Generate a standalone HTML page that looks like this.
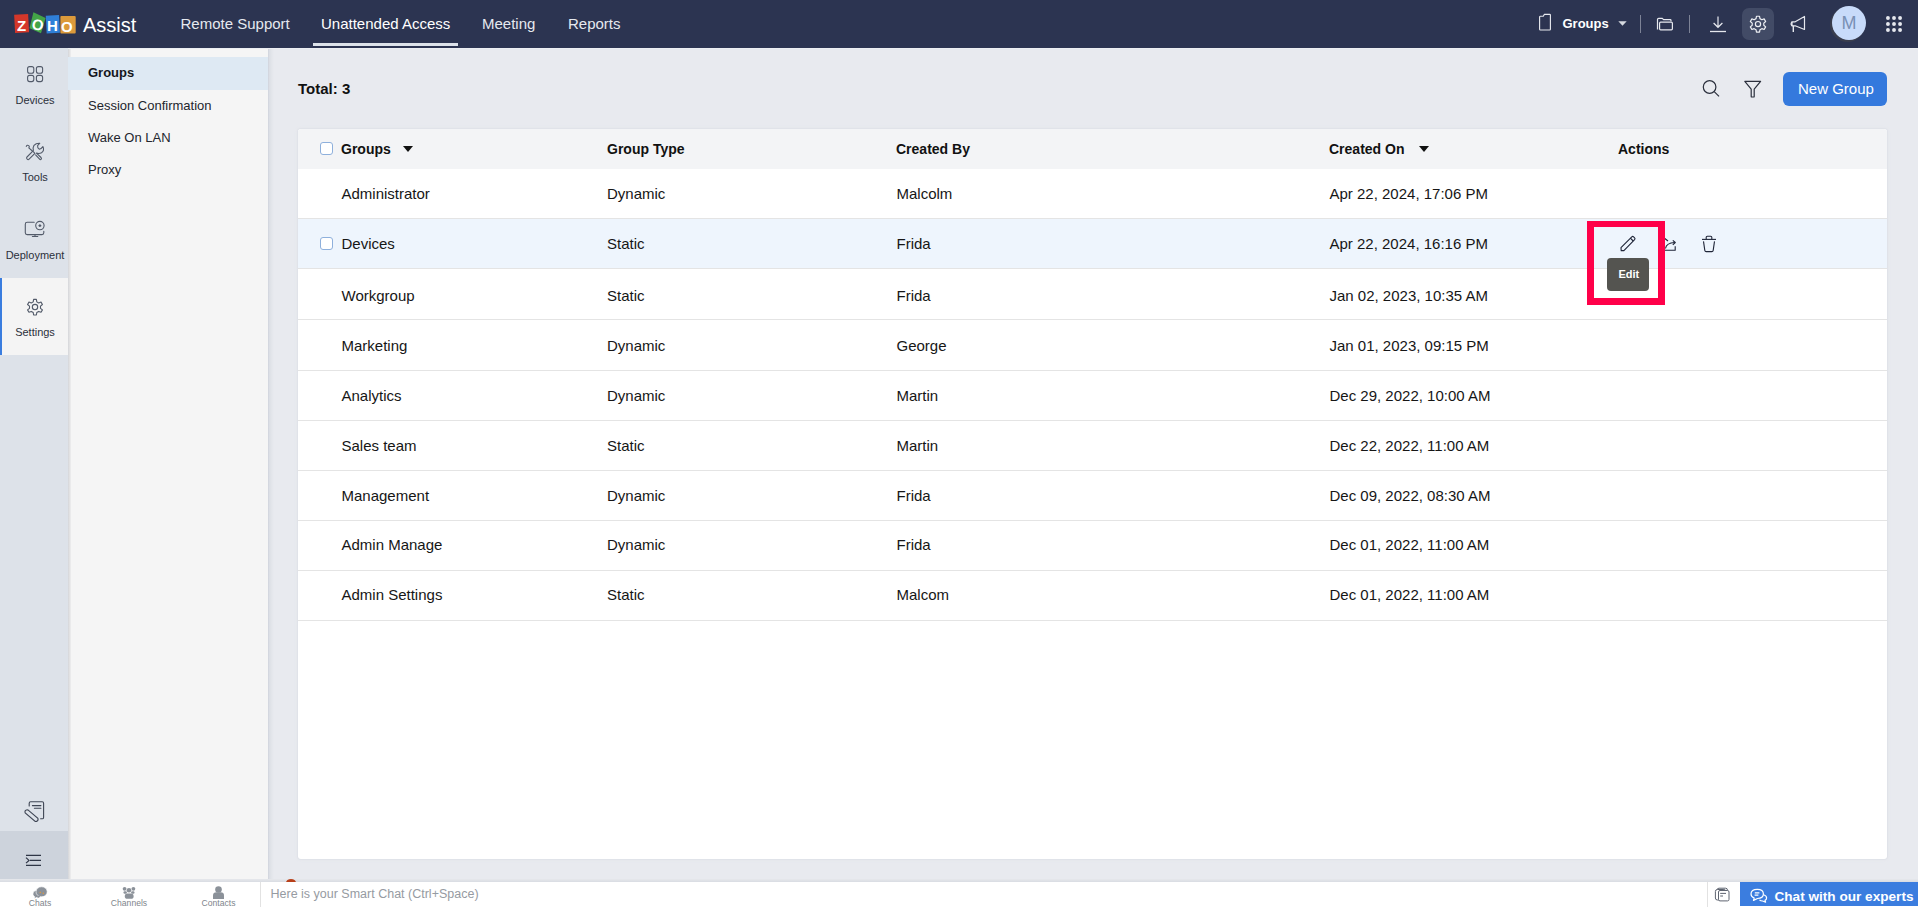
<!DOCTYPE html>
<html><head><meta charset="utf-8">
<style>
*{box-sizing:border-box;margin:0;padding:0}
html,body{width:1919px;height:907px;overflow:hidden;background:#e8eaef;font-family:"Liberation Sans",sans-serif;color:#1d1d1f;position:relative}
.a{position:absolute;white-space:nowrap;line-height:1}
.b{position:absolute}
svg.b{overflow:visible}
</style></head>
<body>
<div class="b" style="left:0;top:0;width:1919px;height:48px;background:#2c3451"></div>
<svg class="b" style="left:0;top:0" width="80" height="48" viewBox="0 0 80 48">
<g transform="rotate(-3 21.5 23.4)"><rect x="14.6" y="14.3" width="14" height="18.4" fill="#d4372a"/></g>
<path d="M33.4 12.2L45.6 17.9L41 33.2L29.5 28.2Z" fill="#43a447"/>
<g transform="rotate(-3 52.8 24.2)"><rect x="46.2" y="15.4" width="13.3" height="17.7" fill="#2f7fd8"/></g>
<rect x="60.4" y="16" width="15.3" height="17.5" rx="1" fill="#dc9a3b"/>
<g font-family="Liberation Sans" font-weight="bold" font-size="15" fill="#fff" text-anchor="middle">
<text x="21.5" y="31.4">Z</text><text x="37.9" y="30" transform="rotate(12 37.9 24.5)">O</text><text x="52.4" y="31.4">H</text><text x="66.9" y="31.7">O</text>
</g></svg>
<div class="a" style="left:83px;top:15.07px;font-size:20px;font-weight:normal;color:#ffffff;">Assist</div>
<div class="a" style="left:180.5px;top:16.30px;font-size:15px;font-weight:normal;color:#e6e9ef;">Remote Support</div>
<div class="a" style="left:321px;top:16.30px;font-size:15px;font-weight:normal;color:#ffffff;">Unattended Access</div>
<div class="b" style="left:313px;top:43px;width:145px;height:3px;background:#dde2ea"></div>
<div class="a" style="left:482px;top:16.30px;font-size:15px;font-weight:normal;color:#e6e9ef;">Meeting</div>
<div class="a" style="left:568px;top:16.30px;font-size:15px;font-weight:normal;color:#e6e9ef;">Reports</div>
<svg class="b" style="left:1535px;top:10px" width="20" height="26" viewBox="0 0 20 26"><path d="M5.4 6.2H8.3L9.4 4.3H14.6Q15.4 4.3 15.4 5.1V19.2Q15.4 20 14.6 20H5.4Q4.6 20 4.6 19.2V7Q4.6 6.2 5.4 6.2Z" fill="none" stroke="#e6e8ee" stroke-width="1.15" stroke-linejoin="round"/></svg>
<div class="a" style="left:1562.5px;top:16.60px;font-size:13px;font-weight:bold;color:#ffffff;">Groups</div>
<svg class="b" style="left:1617.5px;top:20.5px" width="9" height="5" viewBox="0 0 9 5"><path d="M0.3 0.3H8.7L4.5 4.7Z" fill="#d6d9e0"/></svg>
<div class="b" style="left:1640px;top:15px;width:1px;height:18px;background:#7d8396"></div>
<div class="b" style="left:1689px;top:15px;width:1px;height:18px;background:#7d8396"></div>
<svg class="b" style="left:1655px;top:16px" width="20" height="16" viewBox="0 0 20 16"><path d="M2.5 13.5V3.5Q2.5 2.3 3.7 2.3H7.2L8.6 3.6H15.2Q16 3.6 16 4.4V5.3" fill="none" stroke="#e6e8ee" stroke-width="1.2"/><rect x="4.6" y="6.2" width="12.8" height="7.6" rx="1" fill="none" stroke="#e6e8ee" stroke-width="1.2"/></svg>
<svg class="b" style="left:1709px;top:15px" width="18" height="18" viewBox="0 0 18 18"><path d="M9 1.5V12M4.6 8L9 12.3L13.4 8" fill="none" stroke="#e6e8ee" stroke-width="1.2"/><path d="M1 16.5H17" stroke="#e6e8ee" stroke-width="1.3"/></svg>
<div class="b" style="left:1742px;top:8px;width:32px;height:32px;background:#424b66;border-radius:7px"></div>
<svg class="b" style="left:1742px;top:8px" width="32" height="32" viewBox="0 0 32 32"><path d="M14.04 10.63 L14.48 8.24 L17.52 8.24 L17.96 10.63 L19.84 11.72 L22.13 10.91 L23.65 13.54 L21.80 15.11 L21.80 17.29 L23.65 18.86 L22.13 21.49 L19.84 20.68 L17.96 21.77 L17.52 24.16 L14.48 24.16 L14.04 21.77 L12.16 20.68 L9.87 21.49 L8.35 18.86 L10.20 17.29 L10.20 15.11 L8.35 13.54 L9.87 10.91 L12.16 11.72Z" fill="none" stroke="#eef0f4" stroke-width="1.2" stroke-linejoin="round"/><circle cx="16" cy="16.1" r="2.6" fill="none" stroke="#eef0f4" stroke-width="1.2"/></svg>
<svg class="b" style="left:1789px;top:15px" width="18" height="18" viewBox="0 0 18 18"><path d="M3 6.8H6.2L15.5 1.5V14.5L6.2 10.8H3Z" fill="none" stroke="#e6e8ee" stroke-width="1.2" stroke-linejoin="round"/><path d="M3 6.8Q1.2 8.8 3 10.8" fill="none" stroke="#e6e8ee" stroke-width="1.2"/><path d="M4.3 10.8V17" stroke="#e6e8ee" stroke-width="1.4"/></svg>
<div class="b" style="left:1830px;top:7px;width:35px;height:35px;border-radius:50%;background:#4a4a4a;opacity:.45"></div>
<div class="b" style="left:1832px;top:6px;width:34px;height:34px;border-radius:50%;background:#c8dbfa"></div>
<div class="a" style="left:1832px;top:13.9px;width:34px;text-align:center;font-size:18px;color:#7890b5">M</div>
<svg class="b" style="left:1886px;top:16px" width="16" height="16" viewBox="0 0 16 16"><circle cx="1.95" cy="1.95" r="1.95" fill="#e6e8ee"/><circle cx="1.95" cy="8.0" r="1.95" fill="#e6e8ee"/><circle cx="1.95" cy="14.049999999999999" r="1.95" fill="#e6e8ee"/><circle cx="8.0" cy="1.95" r="1.95" fill="#e6e8ee"/><circle cx="8.0" cy="8.0" r="1.95" fill="#e6e8ee"/><circle cx="8.0" cy="14.049999999999999" r="1.95" fill="#e6e8ee"/><circle cx="14.049999999999999" cy="1.95" r="1.95" fill="#e6e8ee"/><circle cx="14.049999999999999" cy="8.0" r="1.95" fill="#e6e8ee"/><circle cx="14.049999999999999" cy="14.049999999999999" r="1.95" fill="#e6e8ee"/></svg>
<div class="b" style="left:0;top:48px;width:68px;height:834px;background:#dde2e9"></div>
<div class="b" style="left:0;top:278px;width:68px;height:77px;background:#f4f4f4"></div>
<div class="b" style="left:0;top:278px;width:2px;height:77px;background:#3a7ddf"></div>
<div class="b" style="left:0;top:831px;width:68px;height:51px;background:#cdd3dc"></div>
<div class="a" style="left:1px;width:68px;text-align:center;top:94.69px;font-size:11px;color:#2b303b">Devices</div>
<div class="a" style="left:1px;width:68px;text-align:center;top:171.69px;font-size:11px;color:#2b303b">Tools</div>
<div class="a" style="left:1px;width:68px;text-align:center;top:249.69px;font-size:11px;color:#2b303b">Deployment</div>
<div class="a" style="left:1px;width:68px;text-align:center;top:326.69px;font-size:11px;color:#2b303b">Settings</div>
<svg class="b" style="left:20px;top:60px" width="30" height="30" viewBox="0 0 30 30"><g fill="none" stroke="#525a69" stroke-width="1.1"><rect x="7.6" y="6.6" width="6.2" height="6.6" rx="2"/><rect x="16.4" y="6.6" width="6.2" height="6.6" rx="2"/><rect x="7.6" y="15.4" width="6.2" height="6.2" rx="2"/><rect x="16.4" y="15.4" width="6.2" height="6.2" rx="2"/></g></svg>
<svg class="b" style="left:20px;top:138px" width="30" height="30" viewBox="0 0 30 30"><g fill="none" stroke="#525a69" stroke-width="1.1" stroke-linejoin="round" stroke-linecap="round"><path d="M7.2 21.2Q6 20 7 19L12.8 13.2L14.9 15.3L9.1 21.1Q8.2 22.2 7.2 21.2Z"/><path d="M13.4 12.4Q12.6 9.8 14 7.3Q16 5 19.8 5.2L17.6 7.6Q17.2 10 19.4 11.2Q21 11.2 22.9 8.6Q24.8 12.6 21.5 14.8Q19.3 16 16.4 15.1"/><path d="M6.3 8.4Q7 6.6 8.7 7.6Q9.9 8.7 8.8 9.8L12.4 13"/><path d="M15.6 16.8L19.6 21.2Q20.4 22.2 21.2 21.2Q21.9 20.3 21 19.5L17 15.6"/></g></svg>
<svg class="b" style="left:20px;top:215px" width="30" height="30" viewBox="0 0 30 30"><g fill="none" stroke="#525a69" stroke-width="1.1" stroke-linecap="round"><path d="M14.2 7.3H7.2Q5.3 7.3 5.3 9.2V17.7Q5.3 19.6 7.2 19.6H21.9Q23.8 19.6 23.8 17.7V16.3"/><circle cx="19.9" cy="10.6" r="4.2"/><path d="M15 19.6V21.3M12.4 21.5H17.8"/></g><path d="M19.9 9.2V12M18.5 10.6H21.3" stroke="#525a69" stroke-width="1.3"/></svg>
<svg class="b" style="left:20px;top:292px" width="30" height="30" viewBox="0 0 30 30"><path d="M13.22 9.89 L13.60 7.42 L16.40 7.42 L16.78 9.89 L18.71 11.00 L21.03 10.10 L22.43 12.52 L20.49 14.09 L20.49 16.31 L22.43 17.88 L21.03 20.30 L18.71 19.40 L16.78 20.51 L16.40 22.98 L13.60 22.98 L13.22 20.51 L11.29 19.40 L8.97 20.30 L7.57 17.88 L9.51 16.31 L9.51 14.09 L7.57 12.52 L8.97 10.10 L11.29 11.00Z" fill="none" stroke="#525a69" stroke-width="1.1" stroke-linejoin="round"/><circle cx="15" cy="15.1" r="2.7" fill="none" stroke="#525a69" stroke-width="1.1"/></svg>
<svg class="b" style="left:18px;top:795px" width="32" height="32" viewBox="0 0 32 32"><g fill="none" stroke="#3e4554" stroke-width="1.1" stroke-linecap="round"><path d="M11.2 11V8.2Q11.2 6.8 12.6 6.8H24.2Q25.6 6.8 25.6 8.2V22.4Q25.6 23.8 24.2 23.8H22.6"/><path d="M14.4 10.6H22.9M16.4 13.2H22.9"/><path d="M9.9 14.9L19.9 23.4Q20.6 25.6 18.6 26.4L17.2 26.5L7.2 18Q6.4 15.6 8.4 15Z"/></g></svg>
<svg class="b" style="left:18px;top:845px" width="32" height="30" viewBox="0 0 32 30"><g fill="none" stroke="#2f3646" stroke-width="1.2"><path d="M8 10.4H23M12 15.4H23M8 20.3H23M8 12.6L11 15.4L8 18.1"/></g></svg>
<div class="b" style="left:68px;top:48px;width:200px;height:834px;background:#f5f5f5"></div>
<div class="b" style="left:268px;top:48px;width:6px;height:834px;background:linear-gradient(90deg,#cdd1da 0,#dadde4 17%,#e1e4e9 50%,#e8eaef 100%)"></div>
<div class="b" style="left:68px;top:48px;width:3px;height:834px;background:linear-gradient(90deg,#d6d7db 0,#d9dadd 20%,#e2e2e3 50%,#eeeeef 100%)"></div>
<div class="b" style="left:68px;top:57px;width:200px;height:33px;background:#dee9f3"></div>
<div class="a" style="left:88px;top:66.00px;font-size:13px;font-weight:bold;color:#15171c;">Groups</div>
<div class="a" style="left:88px;top:99.00px;font-size:13px;font-weight:normal;color:#23262d;">Session Confirmation</div>
<div class="a" style="left:88px;top:130.80px;font-size:13px;font-weight:normal;color:#23262d;">Wake On LAN</div>
<div class="a" style="left:88px;top:163.30px;font-size:13px;font-weight:normal;color:#23262d;">Proxy</div>
<div class="a" style="left:298px;top:81.30px;font-size:15px;font-weight:bold;color:#111;">Total: 3</div>
<div class="b" style="left:1783px;top:72px;width:104px;height:34px;background:#3479dd;border-radius:6px"></div>
<div class="a" style="left:1798px;top:81.30px;font-size:15px;font-weight:normal;color:#ffffff;">New Group</div>
<div class="b" style="left:298px;top:129px;width:1589px;height:730px;background:#fff;border-radius:3px;overflow:hidden;box-shadow:0 0 0 1px #e0e3e9,0 0 3px 1px #e3e5ea"><div class="b" style="left:0;top:0;width:1589px;height:40px;background:#f3f4f6"></div></div>
<div class="a" style="left:341px;top:142.15px;font-size:14px;font-weight:bold;color:#111;">Groups</div>
<div class="a" style="left:607px;top:142.15px;font-size:14px;font-weight:bold;color:#111;">Group Type</div>
<div class="a" style="left:896px;top:142.15px;font-size:14px;font-weight:bold;color:#111;">Created By</div>
<div class="a" style="left:1329px;top:142.15px;font-size:14px;font-weight:bold;color:#111;">Created On</div>
<div class="a" style="left:1618px;top:142.15px;font-size:14px;font-weight:bold;color:#111;">Actions</div>
<svg class="b" style="left:403px;top:146px" width="10" height="6" viewBox="0 0 10 6"><path d="M0 0H10L5 6Z" fill="#111"/></svg>
<svg class="b" style="left:1419px;top:146px" width="10" height="6" viewBox="0 0 10 6"><path d="M0 0H10L5 6Z" fill="#111"/></svg>
<div class="b" style="left:320px;top:142px;width:13px;height:13px;border:1px solid #8eb0dc;border-radius:3px;background:#fff"></div>
<div class="b" style="left:298px;top:219px;width:1589px;height:49px;background:#eef5fd"></div>
<div class="a" style="left:341.5px;top:185.60px;font-size:15px;font-weight:normal;color:#161616;">Administrator</div>
<div class="a" style="left:607px;top:185.60px;font-size:15px;font-weight:normal;color:#161616;">Dynamic</div>
<div class="a" style="left:896.5px;top:185.60px;font-size:15px;font-weight:normal;color:#161616;">Malcolm</div>
<div class="a" style="left:1329.5px;top:185.60px;font-size:15px;font-weight:normal;color:#161616;">Apr 22, 2024, 17:06 PM</div>
<div class="b" style="left:298px;top:218px;width:1589px;height:1px;background:#e4e4e4"></div>
<div class="a" style="left:341.5px;top:235.60px;font-size:15px;font-weight:normal;color:#161616;">Devices</div>
<div class="a" style="left:607px;top:235.60px;font-size:15px;font-weight:normal;color:#161616;">Static</div>
<div class="a" style="left:896.5px;top:235.60px;font-size:15px;font-weight:normal;color:#161616;">Frida</div>
<div class="a" style="left:1329.5px;top:235.60px;font-size:15px;font-weight:normal;color:#161616;">Apr 22, 2024, 16:16 PM</div>
<div class="b" style="left:298px;top:268px;width:1589px;height:1px;background:#e4e4e4"></div>
<div class="a" style="left:341.5px;top:287.90px;font-size:15px;font-weight:normal;color:#161616;">Workgroup</div>
<div class="a" style="left:607px;top:287.90px;font-size:15px;font-weight:normal;color:#161616;">Static</div>
<div class="a" style="left:896.5px;top:287.90px;font-size:15px;font-weight:normal;color:#161616;">Frida</div>
<div class="a" style="left:1329.5px;top:287.90px;font-size:15px;font-weight:normal;color:#161616;">Jan 02, 2023, 10:35 AM</div>
<div class="b" style="left:298px;top:319px;width:1589px;height:1px;background:#e4e4e4"></div>
<div class="a" style="left:341.5px;top:338.10px;font-size:15px;font-weight:normal;color:#161616;">Marketing</div>
<div class="a" style="left:607px;top:338.10px;font-size:15px;font-weight:normal;color:#161616;">Dynamic</div>
<div class="a" style="left:896.5px;top:338.10px;font-size:15px;font-weight:normal;color:#161616;">George</div>
<div class="a" style="left:1329.5px;top:338.10px;font-size:15px;font-weight:normal;color:#161616;">Jan 01, 2023, 09:15 PM</div>
<div class="b" style="left:298px;top:370px;width:1589px;height:1px;background:#e4e4e4"></div>
<div class="a" style="left:341.5px;top:387.60px;font-size:15px;font-weight:normal;color:#161616;">Analytics</div>
<div class="a" style="left:607px;top:387.60px;font-size:15px;font-weight:normal;color:#161616;">Dynamic</div>
<div class="a" style="left:896.5px;top:387.60px;font-size:15px;font-weight:normal;color:#161616;">Martin</div>
<div class="a" style="left:1329.5px;top:387.60px;font-size:15px;font-weight:normal;color:#161616;">Dec 29, 2022, 10:00 AM</div>
<div class="b" style="left:298px;top:420px;width:1589px;height:1px;background:#e4e4e4"></div>
<div class="a" style="left:341.5px;top:437.50px;font-size:15px;font-weight:normal;color:#161616;">Sales team</div>
<div class="a" style="left:607px;top:437.50px;font-size:15px;font-weight:normal;color:#161616;">Static</div>
<div class="a" style="left:896.5px;top:437.50px;font-size:15px;font-weight:normal;color:#161616;">Martin</div>
<div class="a" style="left:1329.5px;top:437.50px;font-size:15px;font-weight:normal;color:#161616;">Dec 22, 2022, 11:00 AM</div>
<div class="b" style="left:298px;top:470px;width:1589px;height:1px;background:#e4e4e4"></div>
<div class="a" style="left:341.5px;top:487.60px;font-size:15px;font-weight:normal;color:#161616;">Management</div>
<div class="a" style="left:607px;top:487.60px;font-size:15px;font-weight:normal;color:#161616;">Dynamic</div>
<div class="a" style="left:896.5px;top:487.60px;font-size:15px;font-weight:normal;color:#161616;">Frida</div>
<div class="a" style="left:1329.5px;top:487.60px;font-size:15px;font-weight:normal;color:#161616;">Dec 09, 2022, 08:30 AM</div>
<div class="b" style="left:298px;top:520px;width:1589px;height:1px;background:#e4e4e4"></div>
<div class="a" style="left:341.5px;top:536.90px;font-size:15px;font-weight:normal;color:#161616;">Admin Manage</div>
<div class="a" style="left:607px;top:536.90px;font-size:15px;font-weight:normal;color:#161616;">Dynamic</div>
<div class="a" style="left:896.5px;top:536.90px;font-size:15px;font-weight:normal;color:#161616;">Frida</div>
<div class="a" style="left:1329.5px;top:536.90px;font-size:15px;font-weight:normal;color:#161616;">Dec 01, 2022, 11:00 AM</div>
<div class="b" style="left:298px;top:570px;width:1589px;height:1px;background:#e4e4e4"></div>
<div class="a" style="left:341.5px;top:586.90px;font-size:15px;font-weight:normal;color:#161616;">Admin Settings</div>
<div class="a" style="left:607px;top:586.90px;font-size:15px;font-weight:normal;color:#161616;">Static</div>
<div class="a" style="left:896.5px;top:586.90px;font-size:15px;font-weight:normal;color:#161616;">Malcom</div>
<div class="a" style="left:1329.5px;top:586.90px;font-size:15px;font-weight:normal;color:#161616;">Dec 01, 2022, 11:00 AM</div>
<div class="b" style="left:298px;top:620px;width:1589px;height:1px;background:#e4e4e4"></div>
<div class="b" style="left:320px;top:237px;width:13px;height:13px;border:1px solid #8eb0dc;border-radius:3px;background:#fff"></div>
<svg class="b" style="left:1612px;top:228px" width="30" height="30" viewBox="0 0 30 30"><g fill="none" stroke="#1f2538" stroke-width="1.1" stroke-linejoin="round"><path d="M9.2 22.6L9 19.6L19.8 8.8Q20.7 7.9 21.6 8.8L22.6 9.8Q23.5 10.7 22.6 11.6L11.9 22.6Z"/><path d="M18.4 10.2L21.2 13"/></g></svg>
<svg class="b" style="left:1660px;top:228px" width="20" height="30" viewBox="0 0 20 30"><g fill="none" stroke="#1f2538" stroke-width="1.1" stroke-linejoin="round"><path d="M4.6 22.3H15.2V18.3"/><path d="M5.5 20.5Q6.2 15 14.8 14.5"/><path d="M12.8 12.4L15.3 14.5L12.8 16.8"/><path d="M3.5 9.5L8 13"/></g></svg>
<svg class="b" style="left:1694px;top:228px" width="30" height="30" viewBox="0 0 30 30"><g fill="none" stroke="#1f2538" stroke-width="1.1" stroke-linejoin="round"><path d="M8 11.4H22"/><path d="M12.2 11.2V9.3Q12.2 8.2 13.3 8.2H16.7Q17.8 8.2 17.8 9.3V11.2"/><path d="M9.5 13.3L10.8 22.4Q11 23.6 12.2 23.6H17.8Q19 23.6 19.2 22.4L20.5 13.3"/></g></svg>
<svg class="b" style="left:1700px;top:77px" width="22" height="22" viewBox="0 0 22 22"><g fill="none" stroke="#2a2f3c" stroke-width="1.2"><circle cx="9.6" cy="10" r="6.3"/><path d="M14.2 14.6L19 19.4"/></g></svg>
<svg class="b" style="left:1742px;top:78px" width="22" height="22" viewBox="0 0 22 22"><g fill="none" stroke="#2a2f3c" stroke-width="1.2" stroke-linejoin="round"><path d="M2.8 3.4H18.6L12.2 11.2V18.4Q12.2 19 11.6 19H9.8Q9.2 19 9.2 18.4V11.2Z"/></g></svg>
<div class="b" style="left:0;top:879px;width:1919px;height:3px;background:linear-gradient(#e6e8ec,#d9dce2)"></div>
<div class="b" style="left:286px;top:878.5px;width:10px;height:7px;border-radius:50%;background:#b8401a"></div>
<div class="b" style="left:0;top:882px;width:1919px;height:25px;background:#fff"></div>
<div class="b" style="left:1740px;top:882px;width:178px;height:24px;background:#3b7ddf"></div>
<svg class="b" style="left:30px;top:884px" width="20" height="16" viewBox="0 0 20 16"><path d="M5.5 6.5Q2.5 7.5 3 10.5Q3.4 12 4.8 12.8L4.3 14.6L7 13.3Q9 13.8 10.5 13" fill="#8b9199" stroke="#fff" stroke-width="0.6"/><ellipse cx="11.6" cy="7.8" rx="5.6" ry="5" fill="#8b9199" stroke="#fff" stroke-width="0.6"/><path d="M8 11.5L7.5 14.2L10.5 12.6Z" fill="#8b9199"/><circle cx="10.3" cy="8.4" r=".7" fill="#e59a3a"/><circle cx="13.3" cy="9.2" r=".7" fill="#e59a3a"/></svg>
<svg class="b" style="left:120px;top:884px" width="18" height="16" viewBox="0 0 18 16"><g fill="#8b9199"><circle cx="4.6" cy="4.8" r="1.9"/><circle cx="13.4" cy="4.8" r="1.9"/><circle cx="9" cy="6.2" r="2.3"/><rect x="3.5" y="7.2" width="3.4" height="2.6" rx="1.2"/><rect x="11.1" y="7.2" width="3.4" height="2.6" rx="1.2"/><rect x="4.8" y="9.5" width="8.8" height="5.3" rx="2.6"/></g></svg>
<svg class="b" style="left:210px;top:884px" width="16" height="16" viewBox="0 0 16 16"><g fill="#8b9199"><circle cx="8.5" cy="5.5" r="3.3"/><path d="M3 15V11.5Q3 8.3 6.5 8.3H10.5Q14 8.3 14 11.5V15Z"/></g></svg>
<svg class="b" style="left:1712px;top:885px" width="22" height="18" viewBox="0 0 22 18"><g fill="#fff" stroke="#5e6470" stroke-width="1"><rect x="5" y="3.2" width="10.5" height="10" rx="2"/><rect x="3.4" y="4.5" width="10.5" height="10.5" rx="2"/><rect x="6.5" y="5.5" width="10.5" height="10.4" rx="1.5"/></g><path d="M8.2 8.4H14M8.2 11H11" stroke="#5e6470" stroke-width="1"/></svg>
<svg class="b" style="left:1748px;top:886px" width="22" height="18" viewBox="0 0 22 18"><g fill="none" stroke="#fff" stroke-width="1.2" stroke-linejoin="round"><path d="M9.3 3.3Q15.4 3.3 15.4 8Q15.4 12.2 9.5 12.5L5.5 14.4L6.2 12Q3 10.7 3 8Q3 3.3 9.3 3.3Z"/><path d="M15.6 8.8Q18.6 9.8 18.6 12Q18.6 13.6 17 14.4L17.6 16.2L14.6 15Q12.6 15 11.5 13.8"/><path d="M6.8 6.8H11.4M6.6 9.2H10.4"/></g></svg>
<div class="b" style="left:1587px;top:221px;width:78px;height:84px;border-style:solid;border-color:#ff0049;border-width:6px 7px 7px 7px"></div>
<div class="b" style="left:1607px;top:258px;width:42px;height:33px;background:#545450;border-radius:4px"></div>
<div class="a" style="left:1618.5px;top:268.99px;font-size:11px;font-weight:bold;color:#ffffff;">Edit</div>
<div class="b" style="left:260px;top:882px;width:1px;height:25px;background:#e2e2e2"></div>
<div class="a" style="left:270.5px;top:888.42px;font-size:12.5px;font-weight:normal;color:#969ba2;">Here is your Smart Chat (Ctrl+Space)</div>
<div class="b" style="left:1707px;top:882px;width:1px;height:25px;background:#e2e2e2"></div>
<div class="a" style="left:1774.5px;top:889.99px;font-size:13.6px;font-weight:bold;color:#ffffff;">Chat with our experts</div>
<div class="a" style="left:0px;width:80px;text-align:center;top:898.8px;font-size:8.6px;color:#80858c">Chats</div>
<div class="a" style="left:89px;width:80px;text-align:center;top:898.8px;font-size:8.6px;color:#80858c">Channels</div>
<div class="a" style="left:178.5px;width:80px;text-align:center;top:898.8px;font-size:8.6px;color:#80858c">Contacts</div>
<div class="b" style="left:1918px;top:0;width:1px;height:907px;background:#fff"></div>
<div class="b" style="left:68px;top:48px;width:1850px;height:1px;background:#eceef2"></div>
</body></html>
